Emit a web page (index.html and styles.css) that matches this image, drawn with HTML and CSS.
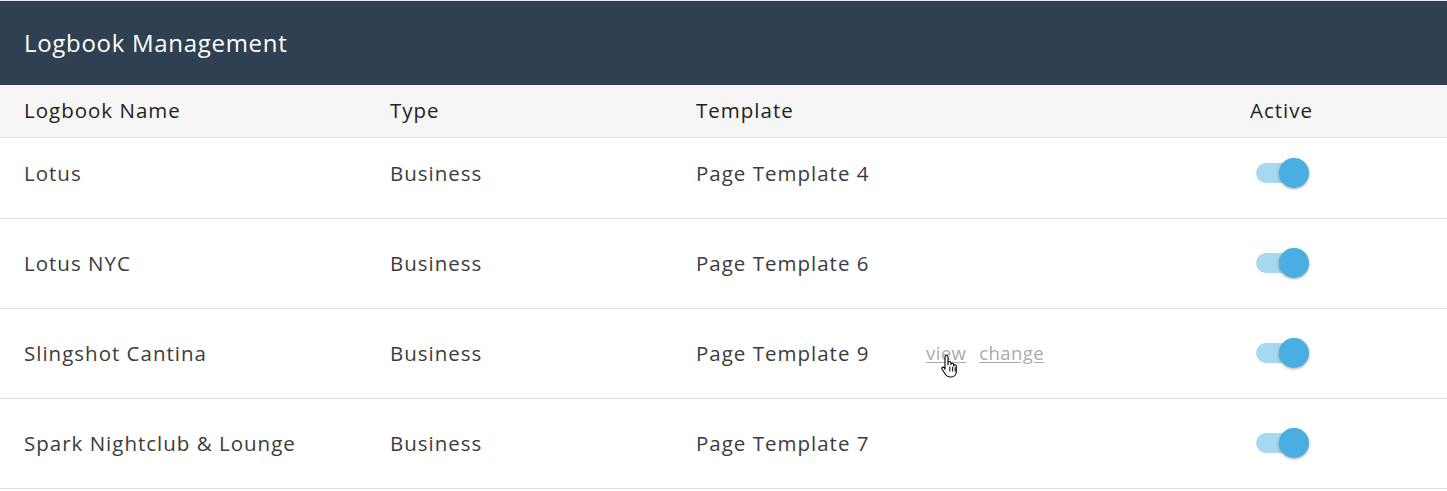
FILE: index.html
```html
<!DOCTYPE html>
<html>
<head>
<meta charset="utf-8">
<link rel="stylesheet" href="styles.css">
</head>
<body>
<div class="panel">
  <div class="topbar"><h1 class="title">Logbook Management</h1></div>
  <div class="row head">
    <div class="c name">Logbook Name</div>
    <div class="c type">Type</div>
    <div class="c tpl">Template</div>
    <div class="c act">Active</div>
  </div>
  <div class="row first">
    <div class="c name">Lotus</div>
    <div class="c type">Business</div>
    <div class="c tpl">Page Template 4</div>
    <div class="c act"><span class="toggle"><span class="knob"></span></span></div>
  </div>
  <div class="row">
    <div class="c name">Lotus NYC</div>
    <div class="c type">Business</div>
    <div class="c tpl">Page Template 6</div>
    <div class="c act"><span class="toggle"><span class="knob"></span></span></div>
  </div>
  <div class="row">
    <div class="c name">Slingshot Cantina</div>
    <div class="c type">Business</div>
    <div class="c tpl"><span class="tname">Page Template 9</span><span class="links"><a class="lnk">view<svg class="cursor" width="20" height="24" viewBox="0 0 20 24"><path d="M6.5 1.5c.9 0 1.5.6 1.5 1.5v8l.1-2.2c0-.8.6-1.3 1.4-1.3s1.4.6 1.4 1.3v1.8c0-.8.6-1.3 1.4-1.3s1.4.6 1.4 1.3v1.4c0-.7.6-1.2 1.3-1.2s1.3.6 1.3 1.3v5.6c0 3-2.2 5.3-5.2 5.3H9.7c-1.7 0-3-.8-4-2.2l-3.7-5.6c-.4-.7-.2-1.5.5-1.9.6-.3 1.3-.2 1.8.3L5 15.2V3c0-.9.6-1.5 1.5-1.5z" fill="#fff" stroke="#000" stroke-width="1.1" stroke-linejoin="round"/><path d="M9.9 12.5v5M12.6 12.8v4.7M15.1 13.2v4.3" stroke="#000" stroke-width="1"/></svg></a><a class="lnk">change</a></span></div>
    <div class="c act"><span class="toggle"><span class="knob"></span></span></div>
  </div>
  <div class="row">
    <div class="c name">Spark Nightclub &amp; Lounge</div>
    <div class="c type">Business</div>
    <div class="c tpl">Page Template 7</div>
    <div class="c act"><span class="toggle"><span class="knob"></span></span></div>
  </div>
</div>
</body>
</html>
```
FILE: styles.css
```css
* { box-sizing: border-box; }
html, body { margin: 0; padding: 0; background: #fff; }
body { font-family: "Open Sans", sans-serif; color: #333; }
.panel { border-top: 1px solid #e9ecef; }
.topbar {
  background: #2f4052;
  height: 84px;
  display: flex;
  align-items: center;
  padding-left: 24px;
}
.title {
  margin: 0;
  color: #fff;
  font-weight: 400;
  font-size: 24px;
  letter-spacing: 0.7px;
  padding-bottom: 1px;
}
.row {
  display: flex;
  align-items: center;
  height: 90px;
  padding-bottom: 2px;
  border-bottom: 1px solid #e0e0e0;
  font-size: 20.5px;
  letter-spacing: 1px;
  color: #3c3c3c;
}
.row.head {
  height: 53px;
  background: #f6f6f6;
  color: #222;
  padding-bottom: 3px;
}
.row.first { height: 81px; padding-bottom: 11px; }
.c { white-space: nowrap; }
.name { width: 390px; padding-left: 24px; }
.type { width: 306px; }
.tpl { width: 554px; display: flex; align-items: center; }
.act { width: 100px; }
.tname { width: 230px; }
.links { display: flex; gap: 13px; }
.lnk {
  position: relative;
  color: #aaa;
  font-size: 18.5px;
  letter-spacing: 0.4px;
  text-decoration: underline;
  text-underline-offset: 2px;
}
.cursor { position: absolute; left: 14px; top: 14px; }
.toggle {
  position: relative;
  display: block;
  width: 46px;
  height: 20px;
  margin-left: 6px;
  border-radius: 10px;
  background: #a6d8f1;
}
.knob {
  position: absolute;
  left: 23px;
  top: -5px;
  width: 30px;
  height: 30px;
  border-radius: 50%;
  background: #4aaee3;
  box-shadow: 0 1px 3px rgba(0,0,0,0.35);
}
```
